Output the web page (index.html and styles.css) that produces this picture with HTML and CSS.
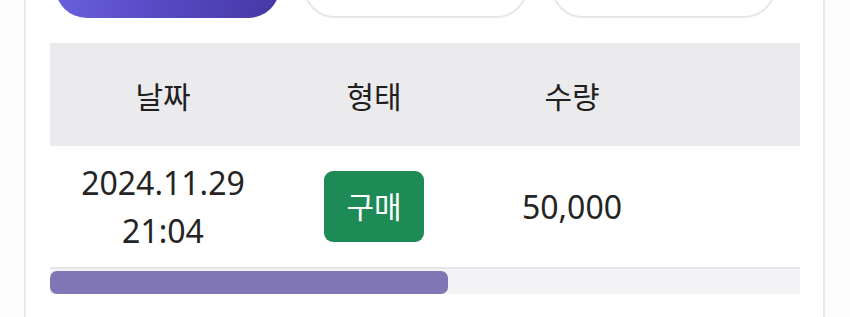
FILE: index.html
```html
<!DOCTYPE html>
<html lang="ko">
<head>
<meta charset="utf-8">
<title>거래 내역</title>
<link rel="stylesheet" href="styles.css">
</head>
<body>
<div class="card">
  <div class="tabs">
    <div class="tab tab-active" aria-label="전체"></div>
    <div class="tab" aria-label="구매"></div>
    <div class="tab" aria-label="판매"></div>
  </div>
  <div class="table-wrap">
    <table class="history">
      <colgroup>
        <col class="c-date"><col class="c-type"><col class="c-qty"><col class="c-rest">
      </colgroup>
      <thead>
        <tr><th>날짜</th><th>형태</th><th>수량</th><th></th></tr>
      </thead>
      <tbody>
        <tr>
          <td class="date">2024.11.29<br>21:04</td>
          <td><span class="badge">구매</span></td>
          <td>50,000</td>
          <td></td>
        </tr>
      </tbody>
    </table>
  </div>
  <div class="scroll-track"><div class="scroll-thumb" style="width: 398px"></div></div>
</div>
</body>
</html>
```
FILE: styles.css
```css
* { box-sizing: border-box; }
html, body { margin: 0; padding: 0; background: #fdfdfd; overflow: hidden; }
body {
  font-family: "Noto Sans", "Noto Sans CJK KR", sans-serif;
  color: #222;
  height: 317px;
}
.card {
  width: 801px;
  margin: -60px 0 0 24px;
  background: #fff;
  border: 2px solid #e9e9eb;
  border-radius: 16px;
  padding: 12px 23px 40px 24px;
}
.tabs {
  display: flex;
  gap: 23px;
  padding-left: 5px;
}
.tab {
  width: 225px;
  height: 64px;
  border-radius: 32px;
  border: 2px solid #e6e7e8;
  background: #fff;
}
.tab-active {
  border: none;
  background: linear-gradient(100deg, #6c62de 0%, #5448c0 55%, #4637a5 100%);
}
.table-wrap {
  margin-top: 25px;
  width: 750px;
  overflow: hidden;
}
.history {
  width: 1413px;
  border-collapse: collapse;
  table-layout: fixed;
}
.c-date { width: 226px; }
.c-type { width: 196px; }
.c-qty { width: 200px; }
.c-rest { width: 791px; }
.history th {
  background: #ebebed;
  height: 103px;
  font-weight: 400;
  font-size: 30px;
  color: #1f1f1f;
  text-align: center;
  padding: 0;
}
.history td {
  height: 122px;
  font-size: 32px;
  text-align: center;
  border-bottom: 2px solid #e6e6ea;
  padding: 0;
  line-height: 48px;
  color: #242424;
}
.badge {
  display: inline-flex;
  align-items: center;
  justify-content: center;
  width: 100px;
  height: 71px;
  border-radius: 9px;
  background: #1e8a56;
  color: #fff;
  font-size: 30px;
  vertical-align: middle;
}
.scroll-track {
  width: 750px;
  height: 25px;
  padding-top: 2px;
  background: #f4f4f7;
}
.scroll-thumb {
  height: 23px;
  border-radius: 7px;
  background: #8075b5;
}
```
